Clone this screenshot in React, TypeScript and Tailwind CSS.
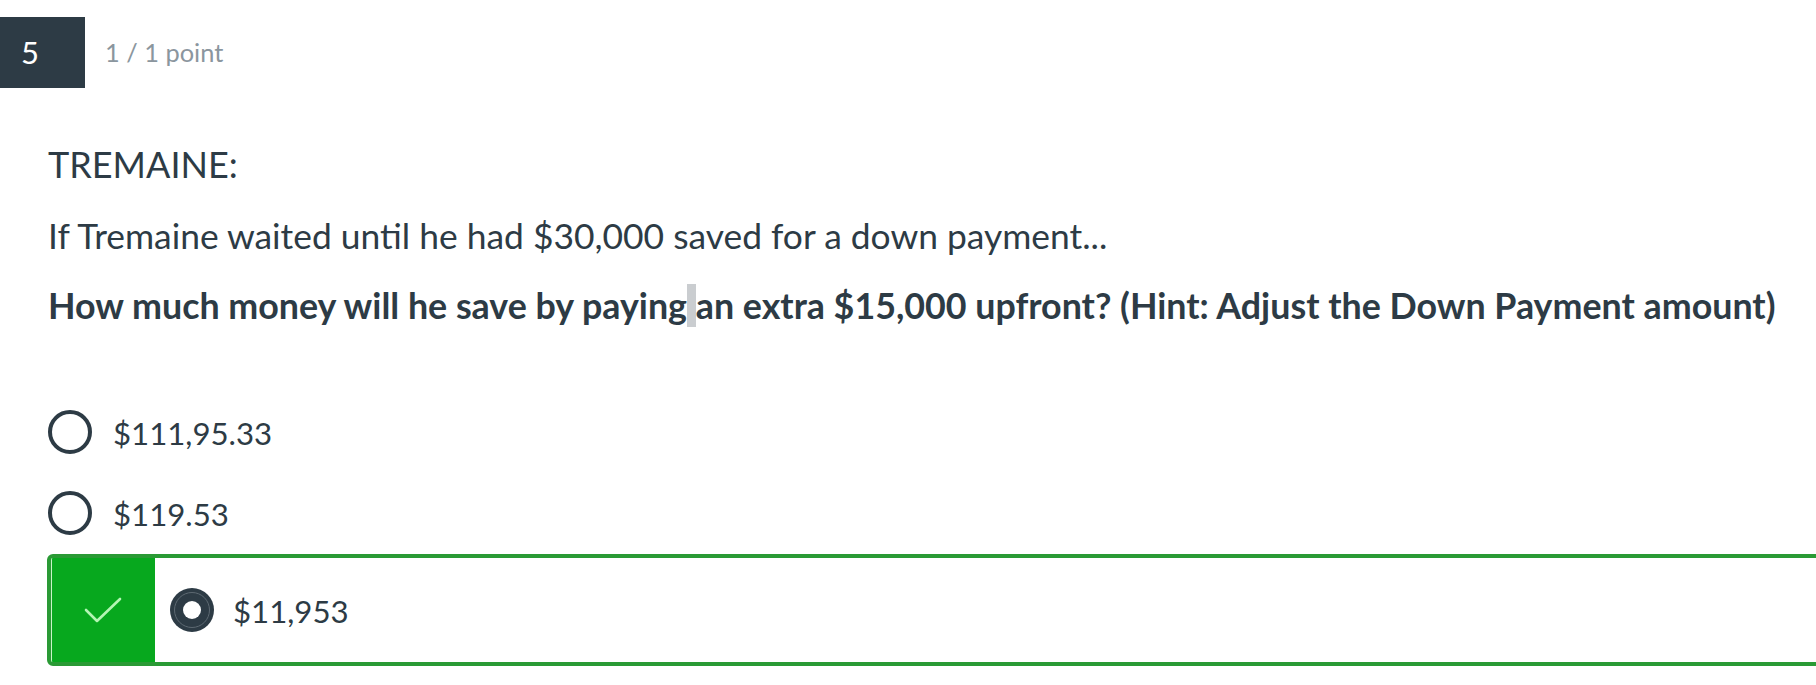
import React from "react";

const FONT = { fontFamily: "Lato, 'Noto Sans', sans-serif" };

function Check() {
  return (
    <svg width="38" height="26" viewBox="0 0 38 26" fill="none">
      <path d="M2 13 L13 24 L36 2" stroke="#b4f5b4" strokeWidth="2.6" strokeLinecap="round" strokeLinejoin="round" />
    </svg>
  );
}

function Radio() {
  return <span className="w-[44px] h-[44px] rounded-full border-[4px] border-[#2d3b45] shrink-0"></span>;
}

export default function App() {
  return (
    <div className="relative w-[1816px] h-[685px] overflow-hidden bg-white text-[#2d3b45]" style={FONT}>
      <div className="pt-[17px] flex items-center">
        <div className="w-[85px] h-[71px] bg-[#2d3b45] text-white text-[31px] flex items-center pl-[21px]">5</div>
        <div className="ml-[20px] text-[25.4px] text-[#8b969e]">1 / 1 point</div>
      </div>
      <div className="pl-[48px]">
        <p className="mt-[55px] text-[36px] leading-[43px]">TREMAINE:</p>
        <p className="mt-[28px] text-[35.4px] leading-[43px]">If Tremaine waited until he had $30,000 saved for a down payment...</p>
        <p className="mt-[27px] text-[35.8px] leading-[43px] font-bold whitespace-nowrap">
          How much money will he save by paying<span className="bg-[#cacdd0]"> </span>an extra $15,000 upfront? (Hint: Adjust the Down Payment amount)
        </p>
        <div className="mt-[83px] flex flex-col">
          <div className="flex items-center h-[44px]">
            <Radio />
            <span className="ml-[21px] pt-[2px] text-[31.2px]">$111,95.33</span>
          </div>
          <div className="flex items-center h-[44px] mt-[37px]">
            <Radio />
            <span className="ml-[21px] pt-[2px] text-[31.2px]">$119.53</span>
          </div>
        </div>
      </div>
      <div className="ml-[47px] mt-[19px] w-[1900px] h-[112px] border-[4px] border-[#2a9a35] rounded-[6px] flex overflow-hidden">
        <div className="w-[104px] bg-[#07a81e] flex items-center justify-center relative">
          <span className="absolute left-0 top-0 bottom-0 w-[1px] bg-[#c8f5c8]"></span>
          <Check />
        </div>
        <div className="flex items-center pl-[15px]">
          <span className="w-[44px] h-[44px] rounded-full bg-[#2d3b45] flex items-center justify-center shrink-0">
            <span className="w-[36px] h-[36px] rounded-full border border-[#5d6972] flex items-center justify-center">
              <span className="w-[18px] h-[18px] rounded-full bg-white"></span>
            </span>
          </span>
          <span className="ml-[19px] pt-[3px] text-[31.2px]">$11,953</span>
        </div>
      </div>
    </div>
  );
}
